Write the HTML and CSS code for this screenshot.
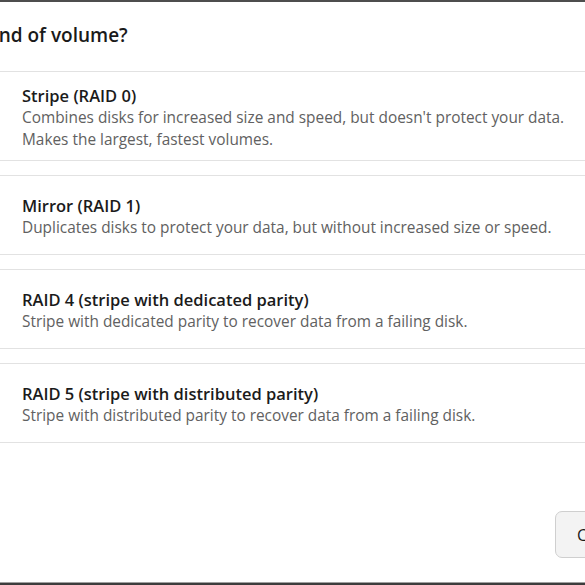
FILE: index.html
```html
<!DOCTYPE html>
<html lang="en">
<head>
    <meta charset="UTF-8">
    <meta name="viewport" content="width=device-width, initial-scale=1.0">
    <title>New Volume</title>
    <link rel="stylesheet" href="styles.css">
</head>
<body>

<div class="dialog">
    <h1 class="dialog-title">What kind of volume?</h1>

    <div class="option-list">
        <div class="option">
            <div class="option-name">Stripe (RAID 0)</div>
            <div class="option-desc">Combines disks for increased size and speed, but doesn't protect your data. Makes the largest, fastest volumes.</div>
        </div>
        <div class="option">
            <div class="option-name">Mirror (RAID 1)</div>
            <div class="option-desc">Duplicates disks to protect your data, but without increased size or speed.</div>
        </div>
        <div class="option">
            <div class="option-name">RAID 4 (stripe with dedicated parity)</div>
            <div class="option-desc">Stripe with dedicated parity to recover data from a failing disk.</div>
        </div>
        <div class="option">
            <div class="option-name">RAID 5 (stripe with distributed parity)</div>
            <div class="option-desc">Stripe with distributed parity to recover data from a failing disk.</div>
        </div>
    </div>

    <div class="dialog-footer">
        <button class="cancel-button">Cancel</button>
    </div>
</div>

</body>
</html>
```

FILE: styles.css
```css
html, body {
    margin: 0;
    padding: 0;
    background-color: #ffffff;
    overflow: hidden;
}

body {
    font-family: 'Open Sans', 'Noto Sans', sans-serif;
    color: #1b1b1b;
}

.dialog {
    box-sizing: border-box;
    width: 585px;
    height: 585px;
    display: flex;
    flex-direction: column;
    border-top: 2px solid #4e4e4e;
    border-bottom: 2px solid #3c3c3c;
    box-shadow: inset 0 -1px 0 #a0a0a0;
}

.dialog-title {
    font-size: 19px;
    font-weight: 600;
    line-height: 28px;
    margin: 19px 0 22px -71px;
    white-space: nowrap;
    color: #1a1a1a;
}

.option-list {
    display: flex;
    flex-direction: column;
    gap: 14px;
}

.option {
    min-height: 80px;
    box-sizing: border-box;
    padding: 13px 10px 9px 22px;
    display: flex;
    flex-direction: column;
    justify-content: center;
    border-top: 1px solid #e2e2e2;
    border-bottom: 1px solid #e2e2e2;
}

.option-name {
    font-size: 16.5px;
    font-weight: 600;
    line-height: 22px;
    color: #1b1b1b;
}

.option-desc {
    font-size: 15.4px;
    line-height: 22px;
    color: #616161;
}

.dialog-footer {
    margin-top: auto;
    display: flex;
    justify-content: flex-end;
    padding-bottom: 25px;
}

.cancel-button {
    width: 90px;
    height: 47px;
    margin-right: -60px;
    padding: 0 0 0 21px;
    text-align: left;
    font-family: inherit;
    font-size: 16px;
    color: #1b1b1b;
    background-color: #f3f3f3;
    border: 1px solid #cfcfcf;
    border-radius: 7px;
}
```
